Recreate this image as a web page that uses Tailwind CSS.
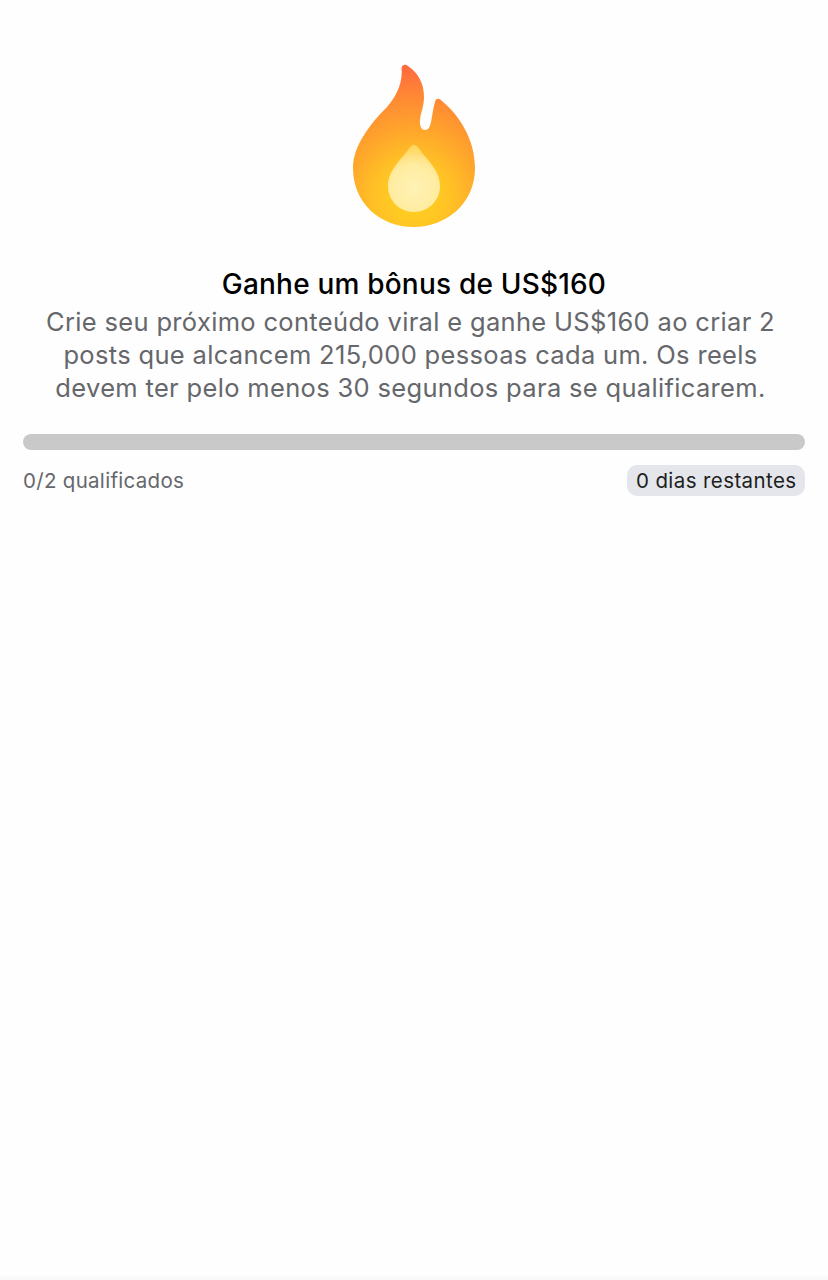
<!DOCTYPE html>
<html lang="pt">
<head>
    <meta charset="UTF-8">
    <title>Bônus</title>
    <script src="https://cdn.jsdelivr.net/npm/@tailwindcss/browser@4"></script>
</head>
<body class="bg-[#fefefe]">
    <div class="relative h-[1280px] w-[828px] overflow-hidden font-['Inter','Liberation_Sans',sans-serif]">
        <div class="flex flex-col items-center pt-[64px]">
            <!-- flame, coordinates are the page's own -->
            <svg class="h-[164px] w-[124px]" viewBox="352 64 124 164">
                <defs>
                    <radialGradient id="flame" gradientUnits="userSpaceOnUse" cx="413" cy="198" r="135">
                        <stop offset="0" stop-color="#ffd21f"/>
                        <stop offset="0.28" stop-color="#ffc225"/>
                        <stop offset="0.52" stop-color="#ffa42c"/>
                        <stop offset="0.78" stop-color="#ff8535"/>
                        <stop offset="1" stop-color="#ff6640"/>
                    </radialGradient>
                    <radialGradient id="drop" gradientUnits="userSpaceOnUse" cx="414" cy="188" r="40">
                        <stop offset="0" stop-color="#fff2b5"/>
                        <stop offset="0.6" stop-color="#ffeca0"/>
                        <stop offset="1" stop-color="#ffd660"/>
                    </radialGradient>
                </defs>
                <path fill="url(#flame)" d="M401.500 68C402.500 64 406 64 408.500 66.500C418 73 424 83 424 97C424 107 420.500 113 420 120C419.500 127 422 130 425 130C428 130 430 127 431 122C432.500 115 433 108 435 102C436 98 439 98 442 101C460 116 475 140 475 168C475 203 447 227 413.500 227C380 227 353 203 353 168C353 146 370 124 387 107C398 95 403 80 401.500 68Z"/>
                <path fill="url(#drop)" d="M414 145C416.500 145 418 147 420 150C427 160 440 170 440 186C440 201 428 212 414 212C400 212 388 201 388 186C388 170 401 160 408 150C410 147 411.500 145 414 145Z"/>
            </svg>

            <h1 class="mt-[39px] text-[28px] leading-[34px] font-medium tracking-[0.2px] text-black">Ganhe um bônus de US$160</h1>
            <p class="mt-[4px] mr-[7px] w-[773px] text-center text-[25.5px] leading-[33px] tracking-[0.33px] text-[#65676b]">
                Crie seu próximo conteúdo viral e ganhe US$160 ao criar 2<br>
                posts que alcancem 215,000 pessoas cada um. Os reels<br>
                devem ter pelo menos 30 segundos para se qualificarem.
            </p>
        </div>

        <div class="mx-[23px] mt-[30px] h-[16px] rounded-full bg-[#c9c9c9]"></div>

        <div class="mx-[23px] mt-[15px] flex items-center justify-between">
            <span class="mt-[1px] text-[20.5px] tracking-[0.3px] text-[#65676b]">0/2 qualificados</span>
            <span class="rounded-[10px] bg-[#e4e6eb] px-[8.5px] py-[1px] text-[20.5px] leading-[29px] tracking-[0.4px] text-[#1c1e21]">0 dias restantes</span>
        </div>

        <div class="absolute right-0 bottom-0 left-0 h-[6px] bg-gradient-to-b from-[#fefefe] to-[#f8f8f8]"></div>
    </div>
</body>
</html>
